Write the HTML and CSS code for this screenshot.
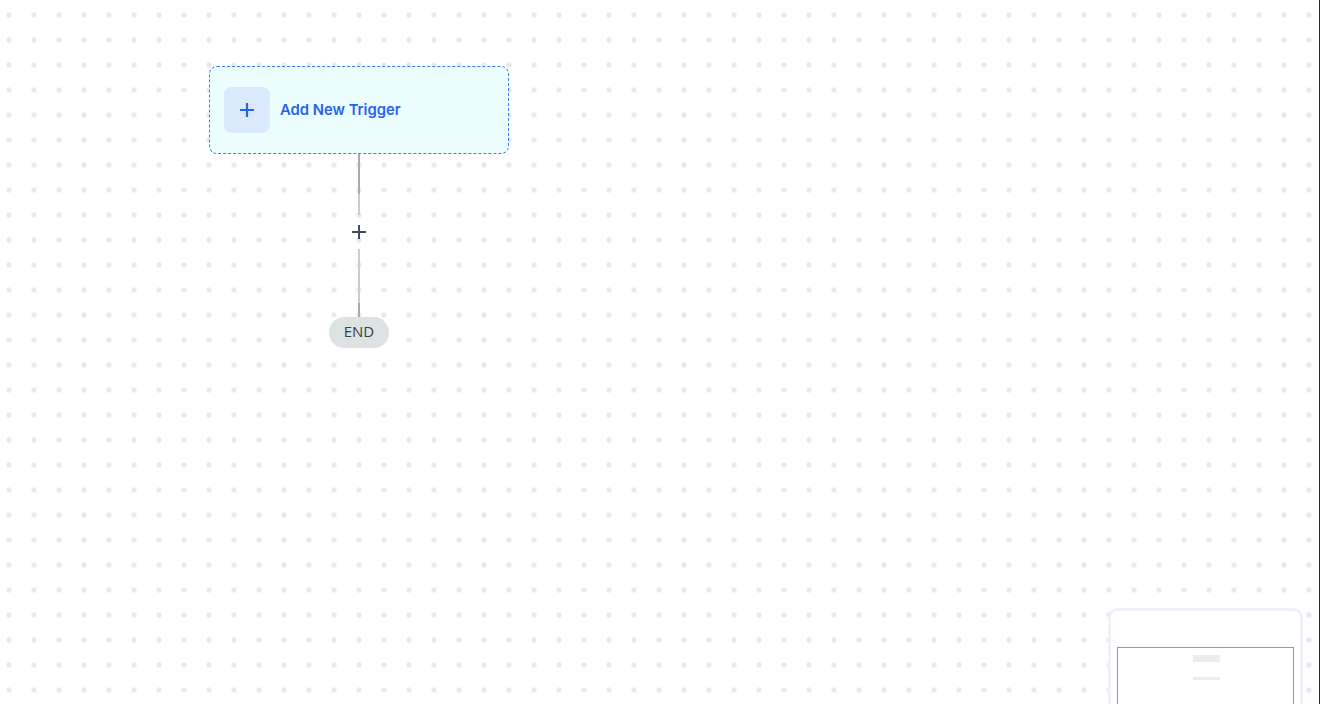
FILE: index.html
```html
<!DOCTYPE html>
<html lang="en">
<head>
<meta charset="utf-8">
<title>Workflow builder</title>
<link rel="stylesheet" href="styles.css">
</head>
<body>
<main class="canvas">
  <div class="flow">
    <button class="trigger" type="button">
      <span class="trigger-icon">
        <svg width="20" height="20" viewBox="0 0 20 20" aria-hidden="true">
          <path d="M10 3v14M3 10h14" stroke="#2563eb" stroke-width="2.2" stroke-linecap="butt"/>
        </svg>
      </span>
      <span class="trigger-label">Add New Trigger</span>
    </button>
    <div class="edge edge-top"></div>
    <button class="add-step" type="button" aria-label="Add step">
      <svg width="16" height="16" viewBox="0 0 16 16" aria-hidden="true">
        <path d="M8 1v14M1 8h14" stroke="#434c5a" stroke-width="2"/>
      </svg>
    </button>
    <div class="edge edge-bottom"></div>
    <div class="end-pill">END</div>
  </div>

  <aside class="minimap">
    <div class="minimap-view">
      <span class="mini-node"></span>
      <span class="mini-line"></span>
    </div>
  </aside>
</main>
</body>
</html>
```

FILE: styles.css
```css
* { box-sizing: border-box; }

html, body {
  margin: 0;
  height: 100%;
  overflow: hidden;
}

body {
  font-family: Inter, "Noto Sans", "Liberation Sans", sans-serif;
  background: #fff;
}

/* dotted workspace */
.canvas {
  position: relative;
  width: 100%;
  height: 100%;
  background-color: #fff;
  background-image: radial-gradient(circle, #e6e8ed 2.4px, rgba(255,255,255,0) 3px);
  background-size: 25px 25px;
  background-position: -3.5px 2.5px;
  border-right: 1px solid #2a2a2a;
}

/* the flow column sits at its place on the canvas */
.flow {
  position: absolute;
  left: 209px;
  top: 66px;
  width: 300px;
  display: flex;
  flex-direction: column;
  align-items: center;
}

.trigger {
  width: 300px;
  height: 88px;
  display: flex;
  align-items: center;
  gap: 10px;
  padding: 0 14px;
  background: #ecfeff;
  border: 1px dashed #3b7cf0;
  border-radius: 8px;
  cursor: pointer;
  font: inherit;
}

.trigger-icon {
  width: 46px;
  height: 46px;
  border-radius: 8px;
  background: #dbeafe;
  display: flex;
  align-items: center;
  justify-content: center;
}

.trigger-label {
  font-size: 14.8px;
  font-weight: 600;
  color: #2563eb;
  line-height: 18px;
  margin-top: 0;
}

.edge {
  width: 2px;
  background: #c5cfd0;
}

.edge-top {
  height: 61px;
  background: linear-gradient(#a9a9b1 0, #a9a9b1 40px, #c5cfd0 40px);
}

.edge-bottom {
  height: 68px;
  background: linear-gradient(#c5cfd0 0, #c5cfd0 54px, #a9a9b1 54px);
}

.add-step {
  width: 20px;
  height: 34px;
  padding: 0;
  border: 0;
  background: transparent;
  display: flex;
  align-items: center;
  justify-content: center;
  cursor: pointer;
}

.end-pill {
  width: 60px;
  height: 31px;
  border-radius: 16px;
  background: #dde3e3;
  color: #34404a;
  font-family: "Open Sans", "Noto Sans", sans-serif;
  font-size: 15px;
  padding-bottom: 3px;
  display: flex;
  align-items: center;
  justify-content: center;
}

/* overview in the bottom-right corner */
.minimap {
  position: absolute;
  left: 1108px;
  top: 608px;
  width: 195px;
  height: 110px;
  background: #fff;
  border: 3px solid #eef0fa;
  border-radius: 9px;
  padding: 36px 6px 0 6px;
}

.minimap-view {
  height: 100%;
  border: 1px solid #9a9a9a;
  display: flex;
  flex-direction: column;
  align-items: center;
  padding-top: 7px;
}

.mini-node {
  width: 27px;
  height: 7px;
  background: #ececec;
  margin-left: 2px;
}

.mini-line {
  width: 27px;
  height: 3px;
  background: #ececec;
  margin-top: 15px;
  margin-left: 2px;
}
```
